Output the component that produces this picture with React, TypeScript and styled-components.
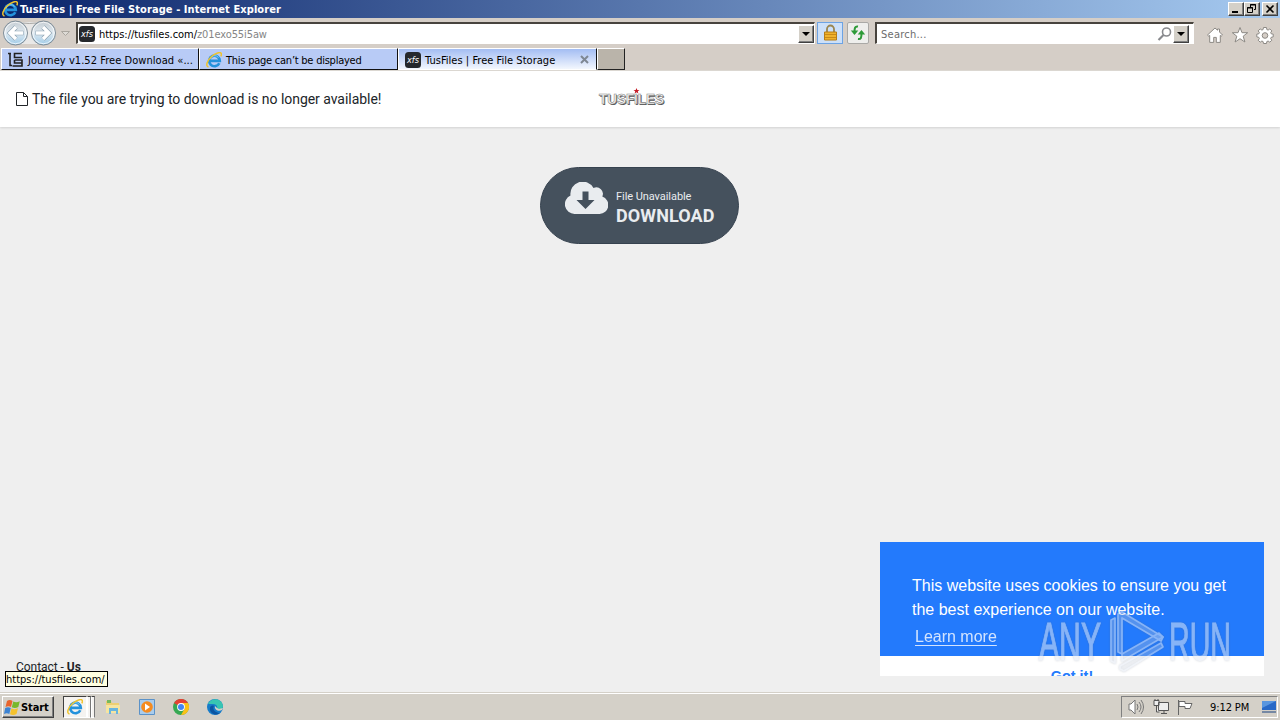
import React from "react";
import styled, { createGlobalStyle } from "styled-components";

const GlobalStyle = createGlobalStyle`
  * { box-sizing: border-box; }
  body { margin: 0; overflow: hidden; }
`;

const Screen = styled.div`
  width: 1280px;
  height: 720px;
  display: flex;
  flex-direction: column;
  background: #d4d0c8;
  font-family: "DejaVu Sans Condensed", "DejaVu Sans", sans-serif;
  font-size: 11px;
  color: #000;
  svg { display: block; flex: none; }
`;

const Label = styled.span<{ $track?: number; $color?: string }>`
  letter-spacing: ${(props) => props.$track ?? 0}px;
  color: ${(props) => props.$color ?? "inherit"};
  white-space: nowrap;
  line-height: 14px;
`;

const TitleBar = styled.header`
  height: 18px;
  flex: none;
  display: flex;
  align-items: center;
  padding: 0 2px;
  background: linear-gradient(90deg, #0a246a, #a6caf0);
  color: #fff;
  font-weight: 700;
`;

const TitleText = styled(Label)`
  flex: 1;
  margin-left: 2px;
  padding-top: 1px;
`;

const WindowButton = styled.button`
  width: 16px;
  height: 14px;
  padding: 0;
  border: 1px solid;
  border-color: #fff #404040 #404040 #fff;
  box-shadow: inset -1px -1px #808080;
  background: #d4d0c8;
  &:last-child { margin-left: 2px; }
`;

const Toolbar = styled.div`
  height: 30px;
  flex: none;
  display: flex;
  align-items: center;
  padding: 0 6px 0 2px;
  background: #d5cec7;
`;

const Field = styled.div<{ $width: number }>`
  width: ${(props) => props.$width}px;
  height: 22px;
  flex: none;
  display: flex;
  align-items: center;
  background: #fff;
  border: 1px solid;
  border-width: 2px 1px 1px 2px;
  border-color: #48443e #fff #fff #48443e;
`;

const AddressField = styled(Field)`
  margin-left: 2px;
  padding-left: 1px;
`;

const SearchField = styled(Field)`
  margin-left: 6px;
  padding: 0 4px 0 4px;
`;

const FieldText = styled(Label)`
  flex: 1;
  margin-left: 4px;
  padding-top: 2px;
`;

const SearchText = styled(FieldText)`
  margin-left: 0;
`;

const DropButton = styled.button`
  width: 16px;
  height: 18px;
  flex: none;
  padding: 0;
  border: 1px solid;
  border-color: #fff #404040 #404040 #fff;
  box-shadow: inset -1px -1px #808080;
  background: #d4d0c8;
  svg { margin: auto; }
`;

const ToolButton = styled.button<{ $active?: boolean }>`
  width: ${(props) => (props.$active ? 26 : 22)}px;
  height: 22px;
  padding: 0;
  display: flex;
  align-items: center;
  justify-content: center;
  border: 1px solid ${(props) => (props.$active ? "#6ca3e4" : "#aaa9a6")};
  border-radius: ${(props) => (props.$active ? 0 : 2)}px;
  background: ${(props) => (props.$active ? "#cce0f9" : "#eeeeec")};
  margin-left: ${(props) => (props.$active ? 2 : 4)}px;
`;

const Commands = styled.div`
  display: flex;
  gap: 7px;
  margin-left: auto;
  padding-top: 3px;
`;

const TabStrip = styled.nav`
  height: 23px;
  flex: none;
  display: flex;
  padding-left: 1px;
  background: #d5cec7;
  border-bottom: 1px solid #ddd9d3;
`;

const Tab = styled.div<{ $width: number; $active?: boolean }>`
  width: ${(props) => props.$width}px;
  height: 22px;
  display: flex;
  align-items: center;
  padding: 1px 7px 0 6px;
  border: 1px solid;
  border-color: #fff #111 ${(props) => (props.$active ? "#fff" : "#111")} #fff;
  background: ${(props) =>
    props.$active ? "linear-gradient(#a3bdf3, #f3f7fe)" : "#b8cbf6"};
`;

const TabText = styled(Label)`
  flex: 1;
  margin-left: 4px;
  padding-top: 2px;
`;

const NewTab = styled.div`
  width: 28px;
  height: 22px;
  border: 1px solid;
  border-color: #fff #222 #222 #fff;
  background: #bab4aa;
`;

const Page = styled.main`
  height: 621px;
  flex: none;
  position: relative;
  display: flex;
  flex-direction: column;
  background: #efefef;
  font-family: Roboto, sans-serif;
  color: #212529;
`;

const PageHeader = styled.div`
  height: 56px;
  flex: none;
  display: grid;
  grid-template-columns: 598px 1fr;
  align-items: center;
  background: #fff;
  box-shadow: 0 1px 2px rgba(0, 0, 0, 0.12);
`;

const Notice = styled.div`
  display: flex;
  align-items: center;
  padding-left: 16px;
  gap: 4px;
  font-size: 14px;
  letter-spacing: -0.04px;
`;

const Download = styled.button`
  width: 199px;
  height: 77px;
  margin: 40px 0 0 540px;
  padding: 0 0 0 24px;
  display: flex;
  align-items: center;
  gap: 8px;
  border: 1px solid #36424f;
  border-radius: 39px;
  background: #45515d;
  color: #e9ecef;
  font-family: Roboto, sans-serif;
  text-align: left;
  svg { margin-top: -15px; }
`;

const DownloadText = styled.span`
  display: flex;
  flex-direction: column;
  font-size: 11px;
  letter-spacing: -0.06px;
  line-height: 16px;
  padding-top: 4px;
  strong {
    font-size: 18px;
    letter-spacing: 0.1px;
    line-height: 22px;
    font-weight: 700;
  }
`;

const Footer = styled.footer`
  margin: auto 0 18px 16px;
  font-size: 12px;
  letter-spacing: -0.04px;
  line-height: 14px;
`;

const StatusTip = styled.div`
  position: absolute;
  left: 5px;
  bottom: 5px;
  width: 103px;
  height: 16px;
  border: 1px solid #000;
  background: #ffffe1;
  color: #000;
  font-family: "DejaVu Sans Condensed", "DejaVu Sans", sans-serif;
  line-height: 15px;
`;

const CookieBox = styled.aside`
  position: absolute;
  left: 880px;
  bottom: 16px;
  width: 384px;
  height: 134px;
  overflow: hidden;
  background: #237afc;
  color: #fff;
  font: 16px/24px "Liberation Sans", Arial, sans-serif;
`;

const CookieText = styled.div`
  height: 114px;
  padding: 32px 32px 0;
`;

const LearnMore = styled.a`
  display: block;
  width: max-content;
  margin: 3px 0 0 3px;
  opacity: 0.8;
  text-decoration: underline;
  text-underline-offset: 3px;
`;

const GotIt = styled.button`
  width: 100%;
  height: 38px;
  display: block;
  padding: 2px 0 0;
  border: 0;
  background: #fff;
  color: #237afc;
  font: 700 14.4px "Liberation Sans", Arial, sans-serif;
`;

const Watermark = styled.div`
  position: absolute;
  left: 1030px;
  top: 529px;
  opacity: 0.52;
  filter: drop-shadow(0 0 1px rgba(90, 100, 120, 0.55));
  svg { overflow: visible; }
`;

const Taskbar = styled.footer`
  height: 28px;
  flex: none;
  display: flex;
  align-items: center;
  padding: 1px 2px 0;
  border-top: 1px solid #d4d0c8;
  box-shadow: inset 0 1px #fff;
  background: #d4d0c8;
`;

const StartButton = styled.button`
  width: 52px;
  height: 22px;
  padding: 0 1px;
  display: flex;
  align-items: center;
  border: 1px solid;
  border-color: #fff #404040 #404040 #fff;
  box-shadow: inset -1px -1px #808080;
  background: #d4d0c8;
  font: 700 11px "DejaVu Sans Condensed", "DejaVu Sans", sans-serif;
  letter-spacing: -0.1px;
`;

const RunningGroup = styled.div`
  width: 32px;
  height: 22px;
  margin-left: 9px;
  display: flex;
  align-items: center;
`;

const RunningApp = styled.div`
  width: 24px;
  height: 22px;
  display: flex;
  align-items: center;
  justify-content: center;
  border: 1px solid;
  border-color: #404040 #fff #fff #404040;
  background: #f5f3f0;
`;

const StackEdge = styled.i`
  width: 4px;
  height: 22px;
  border: 1px solid;
  border-color: #404040 #777 #fff #fff;
  background: #f5f3f0;
`;

const QuickLaunch = styled.div`
  display: flex;
  gap: 18px;
  margin-left: 10px;
`;

const Tray = styled.div`
  width: 157px;
  height: 22px;
  margin-left: auto;
  display: flex;
  align-items: center;
  padding-left: 6px;
  gap: 8px;
  border: 1px solid;
  border-color: #808080 #fff #fff #808080;
`;

const Clock = styled(Label)`
  flex: 1;
  margin-left: 9px;
  padding-top: 1px;
`;

const IeIcon = ({ size = 16 }: { size?: number }) => (
  <svg width={size} height={size} viewBox="0 0 16 16" fill="none">
    <path d="M13.300 11.200A5.300 5.300 0 1 1 13.800 8.900H4.500" stroke="#2492dc" strokeWidth="2.700" />
    <path d="M4 7.500a4.800 4.800 0 0 1 8.500-2" stroke="#7fd0f7" strokeWidth="1" />
    <path d="M2.500 15C-.8 14.300 1 8.500 5.500 4.500 9.500 1 14.500-.4 15.300 1.500c.3.900 0 1.800-.5 2.800" stroke="#f0c32c" strokeWidth="1.500" />
  </svg>
);

const XfsIcon = () => (
  <svg width="16" height="16" viewBox="0 0 16 16">
    <rect width="16" height="16" rx="3.500" fill="#25282c" />
    <text x="8" y="11" textAnchor="middle" textLength="12" lengthAdjust="spacingAndGlyphs" fontFamily="DejaVu Sans" fontStyle="italic" fontSize="8.500" fill="#fff">xfs</text>
  </svg>
);

const JourneyIcon = () => (
  <svg width="16" height="16" viewBox="0 0 16 16" fill="none" stroke="#222" strokeWidth="1.600">
    <path d="M0 1.500h3M2 1.500v12h2M14 1.500H6.500v4H14M6.500 8H14v6H4.500M6.500 8v3H14" />
  </svg>
);

const Arrows = () => (
  <svg width="72" height="28" viewBox="0 0 72 28">
    <defs>
      <linearGradient id="orb" x2="0" y2="1">
        <stop stopColor="#c4cbd1" />
        <stop offset=".48" stopColor="#dfe9f0" />
        <stop offset="1" stopColor="#9fcbe8" />
      </linearGradient>
    </defs>
    <path d="M13 3h28v22H13z" fill="#e9e8e7" />
    <path d="M13 2.500q14.500 4 28 0" fill="none" stroke="#a9a8a6" />
    {[13.5, 41.5].map((x) => (
      <g key={x}>
        <circle cx={x} cy="14" r="12" fill="url(#orb)" stroke="#7e8c97" />
        <circle cx={x} cy="14" r="10.700" fill="none" stroke="#fff" strokeOpacity=".75" />
      </g>
    ))}
    <g fill="none" stroke="#8ba0b0" strokeWidth="4.600">
      <path d="M21.500 14H8M14 8l-6 6 6 6M33.500 14H47M41 8l6 6-6 6" />
    </g>
    <g fill="none" stroke="#fff" strokeWidth="3.400">
      <path d="M21 14H8M14 8l-6 6 6 6M34 14h13M41 8l6 6-6 6" />
    </g>
    <path d="M59.500 12.500h8l-4 4z" fill="#dedbd6" stroke="#aaa69f" />
  </svg>
);

const DownArrow = () => (
  <svg width="8" height="4" viewBox="0 0 8 4"><path d="M0 0h8L4 4z" fill="#000" /></svg>
);

const TusLogo = () => (
  <svg width="68" height="22" viewBox="0 0 68 22">
    <g fontFamily="Liberation Sans" fontWeight="700" fontSize="14">
      <text x="2" y="17" textLength="65" lengthAdjust="spacingAndGlyphs" fill="#555">TUSFILES</text>
      <text x="1" y="16" textLength="65" lengthAdjust="spacingAndGlyphs" fill="#fafafa" stroke="#888" strokeWidth=".6">TUSFILES</text>
    </g>
    <path d="m38.500 0 .8 2h2.200l-1.700 1.300.6 2.200-1.900-1.300-1.900 1.300.6-2.200L35.500 2h2.200z" fill="#c51d27" />
  </svg>
);

const AnyRunMark = () => (
  <svg width="210" height="80" viewBox="0 0 210 80">
    <g fontFamily="Liberation Sans Narrow, Liberation Sans" fontSize="53" fill="#e3e9f3" stroke="#e3e9f3" strokeWidth="1.100">
      <text x="9" y="60" textLength="62" lengthAdjust="spacingAndGlyphs">ANY</text>
      <text x="139" y="60" textLength="62" lengthAdjust="spacingAndGlyphs">RUN</text>
    </g>
    <g fill="#e3e9f3" fillOpacity=".45" stroke="#e3e9f3" strokeWidth="1.700" strokeLinejoin="round">
      <path d="M85 18l-4 2v41l4 2z" />
      <path d="M88 14l4-2 41 25-2 4-39-23v36l-4-2z" />
      <path d="M92 54l37-21 4 4-41 24z" />
      <path d="M90 66l41-23 2 4-39 24-4-2z" />
    </g>
  </svg>
);

const FlagIcon = () => (
  <svg width="17" height="17" viewBox="0 0 17 17">
    <path d="M3 2c2-1.500 4-1 5.500 0L7 8C5.500 7 3.500 7 1.500 8z" fill="#e8642c" />
    <path d="M9.300 2.500c2 1 4 1 6.500-.2l-1.500 5.800c-2 1.300-4.500 1.300-6.500.2z" fill="#78b82a" />
    <path d="M1.200 9C3 8 5 8 6.800 9l-1.500 6C3.700 14 1.800 14 0 15z" fill="#3d83d2" />
    <path d="M7.500 9.300c2.200 1.200 4.500 1 6.500 0L12.500 15c-2 1.200-4.500 1.200-6.500.2z" fill="#f5c22c" />
  </svg>
);

export default function App() {
  return (
    <Screen>
      <GlobalStyle />
      <TitleBar>
        <IeIcon />
        <TitleText $track={0.07}>TusFiles | Free File Storage - Internet Explorer</TitleText>
        <WindowButton><svg width="14" height="12"><path d="M3 9h6" stroke="#000" strokeWidth="2" /></svg></WindowButton>
        <WindowButton><svg width="14" height="12" fill="none" stroke="#000"><path d="M5.500 4V1.500h5v5H9M5 2h6M2.500 4.500h5v5h-5zM2 5h6" /></svg></WindowButton>
        <WindowButton><svg width="14" height="12"><path d="m3.500 2.500 7 7m0-7-7 7" stroke="#000" strokeWidth="1.600" /></svg></WindowButton>
      </TitleBar>

      <Toolbar>
        <Arrows />
        <AddressField $width={739}>
          <XfsIcon />
          <FieldText $track={-0.03}>https://tusfiles.com/<Label $track={-0.1} $color="#858585">z01exo55i5aw</Label></FieldText>
          <DropButton><DownArrow /></DropButton>
        </AddressField>
        <ToolButton $active>
          <svg width="15" height="18" viewBox="0 0 15 18">
            <path d="M4 8V5a3.500 3.500 0 0 1 7 0v3" fill="none" stroke="#9a8651" strokeWidth="1.800" />
            <path d="M1.500 8h12v8h-12z" fill="#efb22c" stroke="#b77d16" />
            <path d="M2 10.500h11M2 13.500h11" stroke="#c98a17" />
          </svg>
        </ToolButton>
        <ToolButton>
          <svg width="16" height="16" viewBox="0 0 16 16" fill="none" stroke="#2c9a37" strokeWidth="2">
            <path d="M8 1.500C5 1 4.500 3 4.500 7M8 14c3 .5 3.500-1.500 3.500-5.500" />
            <path d="M.8 5.500h7.500L4.500 10zM7.700 9.500h7.500L11.500 5z" fill="#2c9a37" stroke="none" />
          </svg>
        </ToolButton>
        <SearchField $width={319}>
          <SearchText $track={0.25} $color="#6c6c6c">Search...</SearchText>
          <svg width="16" height="16" viewBox="0 0 16 16" fill="none" stroke="#88898d">
            <circle cx="9.500" cy="6" r="4" strokeWidth="1.600" /><path d="m6.500 9-5 5" strokeWidth="2.200" />
          </svg>
          <DropButton><DownArrow /></DropButton>
        </SearchField>
        <Commands>
          <svg width="18" height="18" viewBox="0 0 18 18" fill="#fff" stroke="#8c8984"><path d="M1.500 9 9 2l2.500 2.200V3h2v3L16.500 9l-1.300 1.200-.9-.8v7h-4v-5H7.700v5h-4v-7l-.9.8z" /></svg>
          <svg width="18" height="18" viewBox="0 0 18 18" fill="#fff" stroke="#8c8984"><path d="m9 1.500 2 5.200h5.700l-4.500 3.500 1.700 5.800L9 12.700 4.100 16l1.700-5.800L1.300 6.700H7z" /></svg>
          <svg width="18" height="18" viewBox="0 0 18 18" fill="#fff" stroke="#8c8984"><path d="M7.500 1.500h3l.3 2 1.300.6 1.700-1.200 2 2-1.100 1.700.5 1.200 2 .3v2.800l-2 .4-.6 1.200 1.200 1.700-2 2-1.700-1.200-1.300.6-.3 1.900h-3l-.4-1.900-1.200-.6-1.700 1.200-2-2 1.200-1.700-.6-1.200-2-.4V8.100l2-.3.6-1.200-1.200-1.700 2-2 1.700 1.200 1.200-.6z" /><circle cx="9" cy="9.500" r="2.800" fill="#d5cec7" /></svg>
        </Commands>
      </Toolbar>

      <TabStrip>
        <Tab $width={198}><JourneyIcon /><TabText $track={0.05}>Journey v1.52 Free Download «...</TabText></Tab>
        <Tab $width={199}><IeIcon /><TabText $track={-0.24}>This page can’t be displayed</TabText></Tab>
        <Tab $width={199} $active>
          <XfsIcon /><TabText $track={0.03}>TusFiles | Free File Storage</TabText>
          <svg width="9" height="9" stroke="#7e8793" strokeWidth="2"><path d="m1 1 7 7m0-7-7 7" /></svg>
        </Tab>
        <NewTab />
      </TabStrip>

      <Page>
        <PageHeader>
          <Notice>
            <svg width="12" height="14" viewBox="0 0 12 14" fill="none" stroke="#212529"><path d="M.5.500h7l4 4v9H.5zM7.500.500v4h4" /></svg>
            The file you are trying to download is no longer available!
          </Notice>
          <TusLogo />
        </PageHeader>
        <Download>
          <svg width="43" height="32" viewBox="0 0 43 32">
            <path d="M9.500 32A9.700 9.700 0 0 1 5.500 13.500 12.300 12.300 0 0 1 28.500 6a6.500 6.500 0 0 1 8.800 8.500A9 9 0 0 1 34.500 32z" fill="#e9ecef" />
            <path d="M17.500 9.500h6v8.500h6L20.500 27l-9-9h6z" fill="#45515d" />
          </svg>
          <DownloadText>File Unavailable<strong>DOWNLOAD</strong></DownloadText>
        </Download>
        <Footer>Contact - <b>Us</b></Footer>
        <StatusTip>https://tusfiles.com/</StatusTip>
        <CookieBox>
          <CookieText>
            This website uses cookies to ensure you get the best experience on our website.
            <LearnMore>Learn more</LearnMore>
          </CookieText>
          <GotIt>Got it!</GotIt>
        </CookieBox>
        <Watermark>
          <AnyRunMark />
        </Watermark>
      </Page>

      <Taskbar>
        <StartButton><FlagIcon />Start</StartButton>
        <RunningGroup><RunningApp><IeIcon /></RunningApp><StackEdge /><StackEdge /></RunningGroup>
        <QuickLaunch>
          <svg width="16" height="16" viewBox="0 0 16 16"><path d="M1 2h5l1 2h7v10H1z" fill="#edcf72" /><path d="M2 1h4v3H2z" fill="#75b95d" /><path d="M1 6h14v8H1z" fill="#f5e5a0" /><path d="M4 15V9h9v6h-2v-3H6v3z" fill="#68b5df" /></svg>
          <svg width="16" height="16" viewBox="0 0 16 16"><path d="M.5.500h15v15H.5z" fill="#a9ccec" stroke="#5b92c8" /><circle cx="8" cy="8" r="5.800" fill="#f58b1f" /><path d="m6 4.500 5 3.500-5 3.500z" fill="#fff" /></svg>
          <svg width="16" height="16" viewBox="0 0 16 16"><circle cx="8" cy="8" r="8" fill="#36a853" /><path d="M8 8 1 4a8 8 0 0 1 14 0z" fill="#e44134" /><path d="M8 4h7a8 8 0 0 1-7 12l4-7z" fill="#fbc116" /><circle cx="8" cy="8" r="3.900" fill="#fff" /><circle cx="8" cy="8" r="3" fill="#4285f4" /></svg>
          <svg width="16" height="16" viewBox="0 0 16 16"><circle cx="8" cy="8" r="8" fill="#167bc9" /><path d="M1 5C4-2 15-1 16 7c0 3-3 5-6 3 1-3-1-5-4-5-2 0-4 0-5 0z" fill="#38c5b2" /><path d="M7 7c-2 3 1 7 6 7-5 4-11-1-10-5 0-2 2-3 4-2z" fill="#0c54a1" /><path d="M8 7c-1 4 4 6 7 4l1-2-4 1-2-1z" fill="#d4d0c8" /></svg>
        </QuickLaunch>
        <Tray>
          <svg width="17" height="16" viewBox="0 0 17 16" fill="none" stroke="#777"><path d="M1 5h2l4-4v14l-4-4H1z" fill="#fff" /><path d="M9 5q2 3 0 6M11 3q4 5 0 10M13 1q5 7 0 14" /></svg>
          <svg width="16" height="16" viewBox="0 0 16 16" fill="#eee" stroke="#555"><path d="M5.500 3.500h10v8h-10zM8 14.500h6M11 12v2M1 1.500h5v5H1zM2 0v2M5 0v2M3.500 7v6h3" /></svg>
          <svg width="16" height="16" viewBox="0 0 16 16" fill="#fff" stroke="#666"><path d="M1.500 1v15M2 2.500h6v2h7l-2 5H8v-2H2z" /></svg>
          <Clock $track={-0.1}>9:12 PM</Clock>
          <svg width="16" height="14" viewBox="0 0 16 14"><path d="M1 1h14v9H1z" fill="#2869c7" /><path d="M1 1h14L1 8z" fill="#5996df" /><path d="M1 12h14" stroke="#17417e" /></svg>
        </Tray>
      </Taskbar>
    </Screen>
  );
}
